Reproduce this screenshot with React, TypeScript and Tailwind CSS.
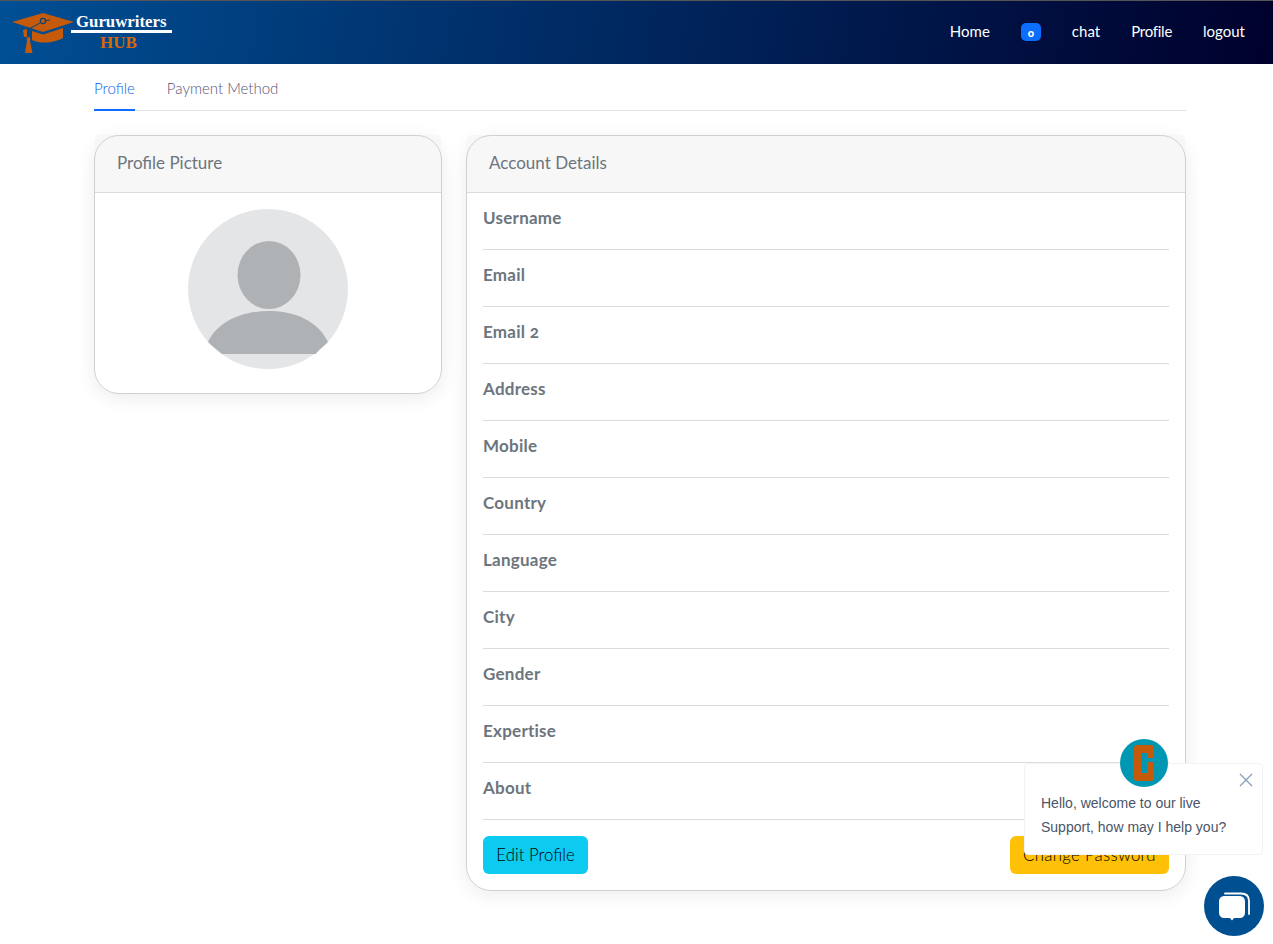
const fields = ['Username', 'Email', 'Email 2', 'Address', 'Mobile', 'Country', 'Language', 'City', 'Gender', 'Expertise', 'About'];

const Logo = () => (
  <div className="relative w-[170px] h-[47px]">
    <svg width="64" height="44" viewBox="0 0 64 44" className="absolute left-0 top-[3px]">
      <path d="M0 10 L31 1 L62 10 L31 20 Z" fill="#c55a0b" />
      <path d="M20 19 L31 22.500 L51 16 V26 C44 30 30 33 20 28 Z" fill="#c55a0b" />
      <path d="M11 18 L15 17 L15 25 L12 25 Z" fill="#c55a0b" />
      <path d="M16.500 25 C18 25 19 27 18 29 L20.500 41 H13 L15 29 C14 27 15 25 16.500 25 Z" fill="#c55a0b" />
      <path d="M15 18 L28 11 M34 8.500 L38 8" fill="none" stroke="#00457f" strokeWidth="1" />
      <circle cx="31" cy="9" r="2.600" fill="none" stroke="#00457f" strokeWidth="1.200" />
    </svg>
    <span className="absolute left-[64px] top-[3px] text-[16.800px] leading-[20px] font-bold text-white font-['Liberation_Serif',serif]">Guruwriters</span>
    <div className="absolute left-[59px] top-[21px] w-[101px] h-[3px] bg-white" />
    <span className="absolute left-[88px] top-[24px] text-[17px] leading-[20px] font-bold text-[#d8660c] font-['Liberation_Serif',serif]">HUB</span>
  </div>
);

const Header = () => (
  <header className="h-[64px] border-t border-[#555] flex items-center justify-between pl-[12px] pr-[28px] bg-[linear-gradient(100deg,#004f94_0%,#003a78_25%,#00002c_100%)]">
    <Logo />
    <nav className="flex items-center gap-[31px] text-[15px] text-white -translate-y-[1px]">
      <a>Home</a>
      <span className="w-[20px] h-[18px] rounded-[5px] bg-[#0d6efd] flex items-center justify-center text-[11px] font-black leading-none pt-[1px]">o</span>
      <a>chat</a>
      <a className="tracking-[-0.25px]">Profile</a>
      <a>logout</a>
    </nav>
  </header>
);

const Tabs = () => (
  <div className="flex gap-[32px] border-b border-[#dee2e6] h-[47px] text-[15px] leading-[22px] font-light">
    <a className="h-[47px] pt-[13px] border-b-2 border-[#0d6efd] text-[#0a5ff0]">Profile</a>
    <a className="pt-[13px] text-[#555577]">Payment Method</a>
  </div>
);

const CardHeader = ({ title }: { title: string }) => (
  <div className="h-[58px] pb-[1px] rounded-t-[6px] bg-[#f7f7f7] border-b border-[#dcdcdc] px-[23px] flex items-center text-[17px] text-[#6c757d]">
    {title}
  </div>
);

// rounded outline drawn over the square-ish header, as in the reference
const CardOutline = () => <div className="absolute inset-0 rounded-[25px] border border-[#d0d0d0] pointer-events-none" />;

const ChatWidget = () => (
  <>
    <div className="absolute left-[1024px] top-[763px] w-[239px] h-[92px] rounded-[4px] bg-white border border-[#f0f2f6] pl-[16px] pt-[27px] text-[14px] leading-[24px] text-[#4a5568] font-['Liberation_Sans',sans-serif]">
      <p>Hello, welcome to our live</p>
      <p>Support, how may I help you?</p>
      <svg width="16" height="16" viewBox="0 0 16 16" className="absolute right-[8px] top-[8px]">
        <path d="M2 2 L14 14 M14 2 L2 14" stroke="#8ba0bd" strokeWidth="1.400" />
      </svg>
    </div>
    <div className="absolute left-[1120px] top-[739px] w-[48px] h-[48px] rounded-full bg-[#0097b2] flex items-center justify-center">
      <svg width="20" height="36" viewBox="0 0 20 36">
        <path fill="#c55a0b" d="M3 0 H17 Q20 0 20 3 V13 H13 V8 H7 V28 H13 V17 H20 V33 Q20 36 17 36 H3 Q0 36 0 33 V3 Q0 0 3 0 Z" />
      </svg>
    </div>
    <div className="absolute left-[1204px] top-[876px] w-[60px] h-[60px] rounded-full bg-[#004f91] flex items-center justify-center">
      <svg width="32" height="30" viewBox="0 0 32 30">
        <path d="M7 2.500 H23 C28 2.500 31 5 31 10 V23" fill="none" stroke="#fff" strokeWidth="1.800" strokeLinecap="round" />
        <path d="M7 5 H21 C25 5 27 7 27 11 V21 C27 25 25 27 21 27 H16 L14 29.500 L12 27 H7 C3 27 1 25 1 21 V11 C1 7 3 5 7 5 Z" fill="#fff" />
      </svg>
    </div>
  </>
);

export default function App() {
  return (
    <div className="relative min-h-[944px] bg-white font-['Lato',sans-serif] overflow-hidden">
      <Header />
      <main className="mx-[94px] w-[1092px]">
        <Tabs />
        <div className="flex gap-[24px] items-start mt-[24px]">
          <section className="relative w-[348px] h-[259px] rounded-[25px] bg-white shadow-[0_4px_20px_rgba(0,0,0,0.08)]">
            <CardHeader title="Profile Picture" />
            <div className="flex justify-center pt-[16px]">
              <svg width="160" height="160" viewBox="0 0 160 160">
                <circle cx="80" cy="80" r="80" fill="#e3e5e7" />
                <ellipse cx="81" cy="66" rx="31.500" ry="34" fill="#aeb2b5" />
                <path d="M20 133 C30 112 55 102 81 102 C107 102 130 112 140 133 C135 138 130 141 128 145 H34 C30 141 25 138 20 133 Z" fill="#aeb2b5" />
              </svg>
            </div>
            <CardOutline />
          </section>
          <section className="relative w-[720px] rounded-[25px] bg-white shadow-[0_4px_20px_rgba(0,0,0,0.08)]">
            <CardHeader title="Account Details" />
            <div className="px-[17px]">
              {fields.map((f) => (
                <div key={f} className="h-[57px] border-b border-[#dcdcdc] pt-[13px] text-[17px] tracking-[0.25px] leading-[24px] font-bold text-[#6c757d] oldstyle-nums">
                  {f}
                </div>
              ))}
              <div className="flex justify-between pt-[16px] pb-[17px]">
                <button className="h-[38px] w-[105px] rounded-[6px] bg-[#0dcaf0] text-[16.800px] font-light text-black">Edit Profile</button>
                <button className="h-[38px] w-[159px] rounded-[6px] bg-[#ffc107] text-[16.800px] tracking-[0.3px] font-light text-black">Change Password</button>
              </div>
            </div>
            <CardOutline />
          </section>
        </div>
      </main>
      <ChatWidget />
    </div>
  );
}
